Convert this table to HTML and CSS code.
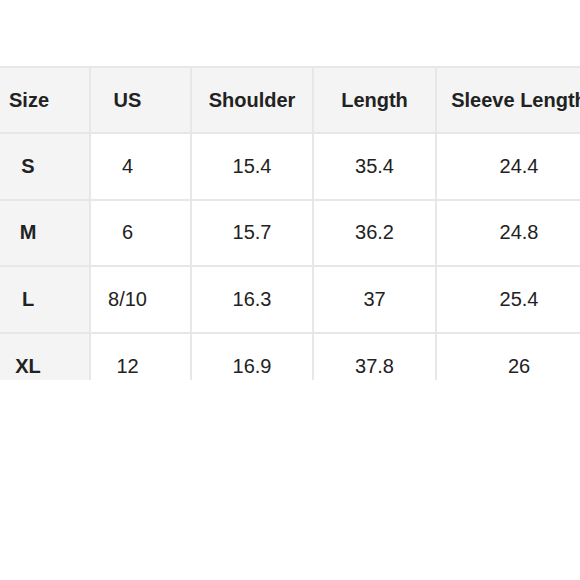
FILE: index.html
```html
<!DOCTYPE html>
<html>
<head>
<meta charset="utf-8">
<link rel="stylesheet" href="styles.css">
</head>
<body>
<div class="frame">
  <table class="sizes">
    <colgroup>
      <col class="c1"><col class="c2"><col class="c3"><col class="c4"><col class="c5">
    </colgroup>
    <thead>
      <tr><th class="first">Size</th><th class="us">US</th><th>Shoulder</th><th>Length</th><th class="sleeve">Sleeve Length</th></tr>
    </thead>
    <tbody>
      <tr><th class="first">S</th><td class="us">4</td><td>15.4</td><td>35.4</td><td class="sleeve">24.4</td></tr>
      <tr><th class="first">M</th><td class="us">6</td><td>15.7</td><td>36.2</td><td class="sleeve">24.8</td></tr>
      <tr><th class="first">L</th><td class="us">8/10</td><td>16.3</td><td>37</td><td class="sleeve">25.4</td></tr>
      <tr><th class="first">XL</th><td class="us">12</td><td>16.9</td><td>37.8</td><td class="sleeve">26</td></tr>
    </tbody>
  </table>
</div>
</body>
</html>
```
FILE: styles.css
```css
html, body {
  margin: 0;
  padding: 0;
  background: #ffffff;
}
.frame {
  margin-top: 66px;
  width: 580px;
  height: 314px;
  overflow: hidden;
}
.sizes {
  border-collapse: collapse;
  table-layout: fixed;
  width: 602px;
  font-family: "Liberation Sans", Arial, sans-serif;
  font-size: 20px;
  color: #222222;
}
.c1 { width: 90px; }
.c2 { width: 101px; }
.c3 { width: 122px; }
.c4 { width: 123px; }
.c5 { width: 166px; }
.sizes thead tr { height: 66px; }
.sizes tbody tr { height: 66.6px; }
.sizes th, .sizes td {
  border: 2px solid #e7e7e7;
  text-align: center;
  vertical-align: middle;
  padding: 0;
  white-space: nowrap;
  overflow: hidden;
}
.sizes tr > :first-child { border-left: none; }
.sizes th { font-weight: bold; }
.sizes td { font-weight: normal; }
.sizes thead th { background: #f4f4f4; }
.sizes tbody th { background: #f4f4f4; }
.sizes .first { padding-right: 33px; }
.sizes .us { padding-right: 26px; }
.sizes .sleeve { padding: 0; }
.sizes thead .first { text-align: left; padding-left: 9px; padding-right: 0; }
```
